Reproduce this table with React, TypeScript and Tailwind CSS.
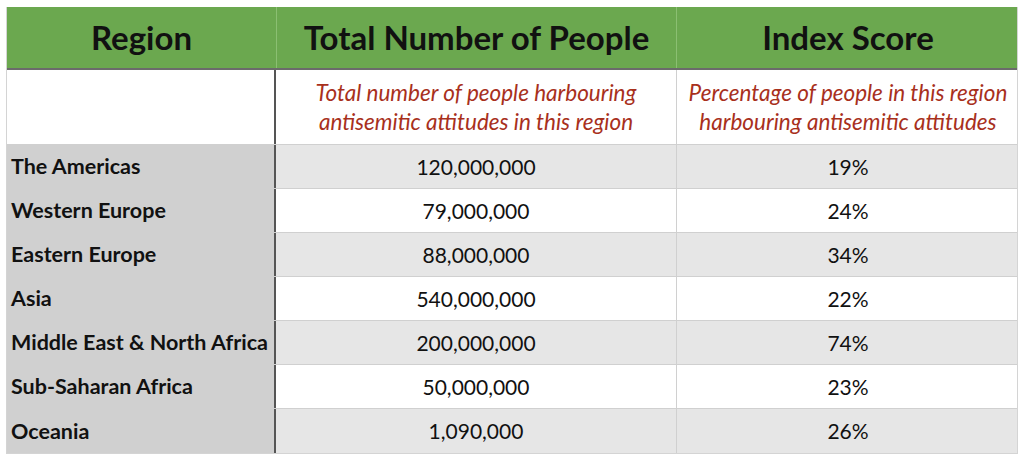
const ROWS = [
  { region: 'The Americas', total: '120,000,000', score: '19%' },
  { region: 'Western Europe', total: '79,000,000', score: '24%' },
  { region: 'Eastern Europe', total: '88,000,000', score: '34%' },
  { region: 'Asia', total: '540,000,000', score: '22%' },
  { region: 'Middle East & North Africa', total: '200,000,000', score: '74%' },
  { region: 'Sub-Saharan Africa', total: '50,000,000', score: '23%' },
  { region: 'Oceania', total: '1,090,000', score: '26%' },
];

export default function App() {
  return (
    <div className="w-[1024px] h-[464px] bg-white pt-[7px] pl-[6px] font-['Lato','Liberation_Sans',sans-serif] text-[#111]">
      <div className="w-[1012px] border-l border-r border-b border-[#d4d4d4]">
        {/* header */}
        <div className="grid grid-cols-[269px_400px_343px] h-[63px] bg-[#6ba84f] border-b-2 border-[#6b6b6b]">
          <div className="flex items-center justify-center text-[33px] font-bold">Region</div>
          <div className="flex items-center justify-center text-[33px] font-bold border-l border-[#8bbf72]">
            Total Number of People
          </div>
          <div className="flex items-center justify-center text-[33px] font-bold border-l border-[#8bbf72]">
            Index Score
          </div>
        </div>

        {/* description row */}
        <div className="grid grid-cols-[269px_400px_343px] h-[75px] bg-white border-b border-[#d0d0d0]">
          <div className="border-r-2 border-[#555]" />
          <div className="flex items-center justify-center text-center italic text-[22.5px] leading-[29px] text-[#a8301c] whitespace-nowrap">
            Total number of people harbouring
            <br />
            antisemitic attitudes in this region
          </div>
          <div className="flex items-center justify-center text-center italic text-[22.5px] leading-[29px] text-[#a8301c] border-l border-[#d0d0d0] whitespace-nowrap">
            Percentage of people in this region
            <br />
            harbouring antisemitic attitudes
          </div>
        </div>

        {ROWS.map((row, i) => (
          <div
            key={row.region}
            className={`grid grid-cols-[269px_400px_343px] h-[44px] ${i % 2 === 0 ? 'bg-[#e6e6e6]' : 'bg-white'} ${
              i < ROWS.length - 1 ? 'border-b border-[#d0d0d0]' : ''
            }`}
          >
            <div className="flex items-center pl-[4px] bg-[#d0d0d0] border-r-2 border-[#555] text-[21.5px] font-bold whitespace-nowrap">
              {row.region}
            </div>
            <div className="flex items-center justify-center text-[21px]">{row.total}</div>
            <div className="flex items-center justify-center text-[21px] border-l border-[#d0d0d0]">{row.score}</div>
          </div>
        ))}
      </div>
    </div>
  );
}
